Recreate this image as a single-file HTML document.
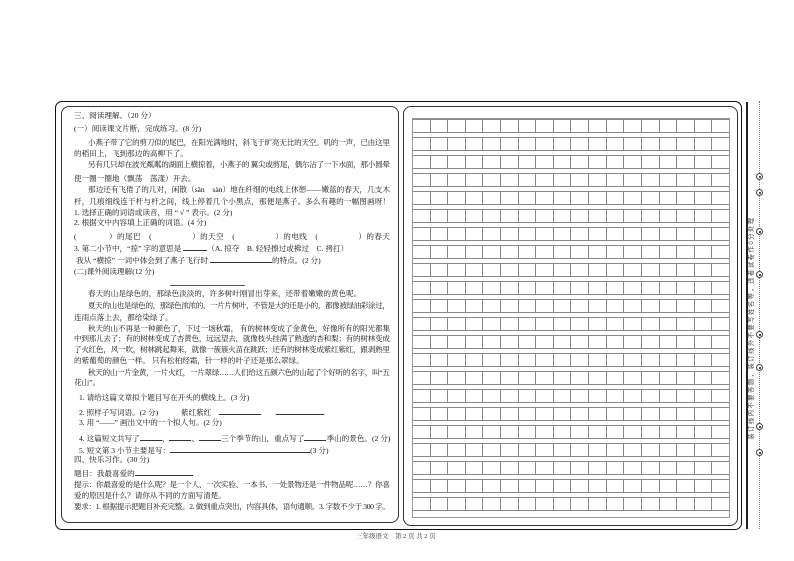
<!DOCTYPE html>
<html><head><meta charset="utf-8"><style>
*{margin:0;padding:0;box-sizing:border-box}
body{width:794px;height:561px;background:#fff;position:relative;overflow:hidden;font-family:"Liberation Serif","Noto Serif CJK SC","Noto Sans CJK SC",serif;color:#111}
.b{position:absolute}
.t{position:absolute;font-size:7.6px;line-height:12px;white-space:nowrap;left:74px}
.i{left:88px}
.u{display:inline-block;border-bottom:0.8px solid #333;height:9px;vertical-align:baseline}
.grid{position:absolute;left:412px;top:118px;width:318px;height:400px;border:1px solid #999}
.row{position:absolute;left:0;width:316px;height:14px;border-top:1px solid #888;border-bottom:1px solid #888;display:flex}
.row div{flex:1;border-right:1px solid #888}
.row div:last-child{border-right:none}
.c{position:absolute;left:756px;width:7px;height:7px;border:1px solid #444;border-radius:50%;background:#fff}
.c:after{content:"";position:absolute;left:2px;top:2px;width:1.5px;height:1.5px;background:#333;border-radius:50%}
</style></head><body>
<div class="b" style="left:55px;top:101px;width:687px;height:429px;border:1.6px solid #111;border-radius:7px"></div>
<div class="b" style="left:61px;top:106px;width:338px;height:417px;border:1px solid #333;border-radius:8px"></div>
<div class="b" style="left:403px;top:106px;width:335px;height:420px;border:1px solid #333;border-radius:8px"></div>
<div class="b" style="left:746px;top:102px;width:1.5px;height:427px;background:#222"></div>
<div class="b" style="left:759px;top:101px;width:0;height:428px;border-left:1.2px dotted #777"></div>
<div class="c" style="top:173px"></div><div class="c" style="top:189px"></div>
<div class="c" style="top:228px"></div><div class="c" style="top:271px"></div>
<div class="c" style="top:331px"></div><div class="c" style="top:364px"></div>
<div class="c" style="top:423px"></div><div class="c" style="top:449px"></div>
<div class="b" style="left:612px;top:324px;width:280px;height:8px;transform:rotate(-90deg);transform-origin:center;font-size:6.3px;line-height:8px;color:#444;font-family:'Liberation Sans','Noto Sans CJK SC',sans-serif;white-space:nowrap;letter-spacing:1.5px;text-align:center">装订线内不要答题，装订线外不要写姓名等，违者试卷作0分处理</div>

<div class="grid">
<div class="row" style="top:0"><div></div><div></div><div></div><div></div><div></div><div></div><div></div><div></div><div></div><div></div><div></div><div></div><div></div><div></div><div></div><div></div><div></div><div></div></div>
</div>

<div class="t" style="top:110px">三、阅读理解。（20 分）</div>
<div class="t" style="top:123px">(一）阅读课文片断，完成练习。(8 分)</div>
<div class="t i" data-w="302" style="top:137px">小燕子带了它的剪刀似的尾巴，在阳光满地时，斜飞于旷亮无比的天空。叽的一声，已由这里</div>
<div class="t" style="top:148px">的稻田上，飞到那边的高柳下了。</div>
<div class="t i" data-w="302" style="top:159px">另有几只却在波光粼粼的湖面上横掠着，小燕子的 翼尖或剪尾，偶尔沾了一下水面，那小圆晕</div>
<div class="t" style="top:173px">使一圈一圈地（飘荡　荡漾）开去。</div>
<div class="t i" data-w="302" style="top:184px">那边还有飞倦了的几对，闲散（sǎn　sàn）地在纤细的电线上休憩——嫩蓝的春天，几支木</div>
<div class="t" data-w="316" style="top:196px">杆，几痕细线连于杆与杆之间，线上停着几个小黑点，那便是燕子。多么有趣的一幅图画呀！</div>
<div class="t" style="top:207px">1. 选择正确的词语或读音，用 “ √ ” 表示。(2 分)</div>
<div class="t" style="top:217px">2. 根据文中内容填上正确的词语。(4 分)</div>
<div class="t" data-w="316" style="top:231px">(　　　　）的尾巴　(　　　　　）的天空　(　　　　　）的电线　(　　　　　）的春天</div>
<div class="t" style="top:242px">3. 第二小节中，“掠” 字的意思是 <span class="u" style="width:24px"></span>（A. 掠夺　B. 轻轻擦过或拂过　C. 拷打）</div>
<div class="t" style="top:254px;left:76px">我从 “横掠” 一词中体会到了燕子飞行时 <span class="u" style="width:62px"></span>的特点。(2 分)</div>
<div class="t" style="top:266px">(二)课外阅读理解(12 分)</div>
<div class="b" style="left:170px;top:285px;width:75px;height:0.8px;background:#555"></div>
<div class="t i" style="top:288px">春天的山是绿色的，那绿色淡淡的，许多树叶刚冒出芽来，还带着嫩嫩的黄色呢。</div>
<div class="t i" data-w="302" style="top:300px">夏天的山也是绿色的，那绿色浓浓的，一片片树叶，不管是大的还是小的，都像被绿油彩涂过，</div>
<div class="t" style="top:312px">连雨点落上去，都给染绿了。</div>
<div class="t i" data-w="302" style="top:323px">秋天的山不再是一种颜色了，下过一场秋霜，  有的树林变成了金黄色，好像所有的阳光都集</div>
<div class="t" data-w="316" style="top:333px">中到那儿去了；有的树林变成了杏黄色，远远望去，就像枝头挂满了熟透的杏和梨；有的树林变成</div>
<div class="t" data-w="316" style="top:344px">了火红色，风一吹，树林跳起舞来，就像一簇簇火苗在跳跃；还有的树林变成紫红紫红，跟剥熟里</div>
<div class="t" style="top:355px">的紫葡萄的颜色一样。  只有松柏经霜，针一样的叶子还是那么翠绿。</div>
<div class="t i" data-w="302" style="top:367px">秋天的山一片金黄，一片火红，一片翠绿……人们给这五颜六色的山起了个好听的名字，叫“五</div>
<div class="t" style="top:377px">花山”。</div>
<div class="t" style="top:392px;left:79px">1. 请给这篇文章拟个题目写在开头的横线上。(3 分)</div>
<div class="t" style="top:406px;left:79px">2. 照样子写词语。(2 分)　　　紫红紫红　<span class="u" style="width:42px"></span>　　<span class="u" style="width:48px"></span></div>
<div class="t" style="top:417px;left:79px">3. 用 “——” 画出文中的一个拟人句。(2 分)</div>
<div class="t" style="top:432px;left:79px">4. 这篇短文共写了<span class="u" style="width:22px"></span>、<span class="u" style="width:22px"></span>、<span class="u" style="width:22px"></span>三个季节的山，重点写了<span class="u" style="width:22px"></span>季山的景色。(2 分)</div>
<div class="t" style="top:444px;left:79px">5. 短文第 3 小节主要是写：<span class="u" style="width:140px"></span>(3 分)</div>
<div class="t" style="top:454px">四、快乐习作。(30 分)</div>
<div class="t" style="top:467px">题目：我最喜爱的<span class="u" style="width:58px"></span></div>
<div class="t" data-w="316" style="top:479px">提示：你最喜爱的是什么呢？是一个人、一次实验、一本书、一处景物还是一件物品呢……？你喜</div>
<div class="t" style="top:490px">爱的原因是什么？请你从不同的方面写清楚。</div>
<div class="t" data-w="316" style="top:501px">要求：1. 根据提示把题目补充完整。2. 做到重点突出，内容具体，语句通顺。3. 字数不少于 300 字。</div>
<div class="b" style="left:356px;top:531px;font-size:6.5px;color:#333;white-space:nowrap">三年级语文　第 2 页 共 2 页</div>
<script>
(function(){var g=document.querySelector('.grid'),r=g.firstElementChild;for(var k=1;k<22;k++){var n=r.cloneNode(true);n.style.top=(k*18)+'px';g.appendChild(n);}
var els=document.querySelectorAll('[data-w]');for(var i=0;i<els.length;i++){var e=els[i],w=+e.getAttribute('data-w'),cw=e.getBoundingClientRect().width,n=e.textContent.length;if(n>1){e.style.letterSpacing=((w-cw)/(n-1))+'px';}}})();
</script>
</body></html>
